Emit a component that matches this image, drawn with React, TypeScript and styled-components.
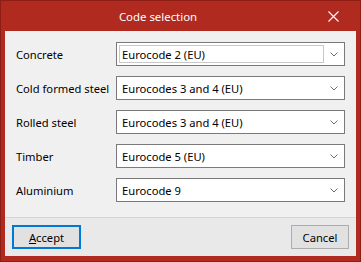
import React from "react";
import styled, { createGlobalStyle } from "styled-components";

const Global = createGlobalStyle`
  html, body { margin: 0; padding: 0; background: #ffffff; }
  * { box-sizing: border-box; }
`;

const Frame = styled.div`
  width: 361px;
  height: 262px;
  background: #b02a20;
  border: 1px solid #8e1d15;
  display: flex;
  flex-direction: column;
  font-family: "Noto Sans", "Segoe UI", sans-serif;
  font-size: 11.2px;
  color: #000;
`;

const TitleBar = styled.div`
  height: 30px;
  display: flex;
  align-items: center;
`;

const Title = styled.div`
  flex: 1;
  text-align: center;
  color: #fff;
  font-size: 11.4px;
  padding-top: 1px;
`;

const CloseBtn = styled.div`
  width: 36px;
  height: 30px;
  margin-right: 9px;
  display: flex;
  align-items: center;
  justify-content: center;
`;

const Content = styled.div`
  flex: 1;
  margin: 0 4px 5px 4px;
  background: #f0f0f0;
  display: flex;
  flex-direction: column;
`;

const Body = styled.div`
  height: 186px;
  padding: 11px 11px 0 11px;
  display: flex;
  flex-direction: column;
  gap: 10px;
`;

const Row = styled.div`
  display: flex;
  align-items: center;
  height: 24px;
`;

const Label = styled.div`
  width: 100px;
  white-space: nowrap;
`;

const Combo = styled.div`
  flex: 1;
  height: 24px;
  background: #fff;
  border: 1px solid #7a7a7a;
  display: flex;
  align-items: center;
  padding: 0 0 0 5px;
`;

const EditField = styled.div`
  flex: 1;
  height: 18px;
  border: 1px solid #c8c8c8;
  margin-left: -3px;
  padding-left: 2px;
  display: flex;
  align-items: center;
`;

const ComboText = styled.div`
  flex: 1;
  white-space: nowrap;
`;

const Arrow = styled.div`
  width: 20px;
  display: flex;
  justify-content: center;
  align-items: center;
`;

const Footer = styled.div`
  flex: 1;
  border-top: 1px solid #d6d6d6;
  background: #e9e9e9;
  display: flex;
  justify-content: space-between;
  align-items: center;
  padding: 0 7px;
`;

const Button = styled.div<{ $focus?: boolean; $w: number }>`
  width: ${(p) => p.$w}px;
  height: 24px;
  background: #e1e1e1;
  border: ${(p) => (p.$focus ? "2px solid #0078d7" : "1px solid #adadad")};
  display: flex;
  align-items: center;
  justify-content: center;
`;

const Chevron = () => (
  <svg width="8" height="5" viewBox="0 0 8 5">
    <path d="M0.5 0.5 L4 4 L7.5 0.5" fill="none" stroke="#707070" strokeWidth="1" />
  </svg>
);

const rows = [
  { label: "Concrete", value: "Eurocode 2 (EU)", edit: true },
  { label: "Cold formed steel", value: "Eurocodes 3 and 4 (EU)" },
  { label: "Rolled steel", value: "Eurocodes 3 and 4 (EU)" },
  { label: "Timber", value: "Eurocode 5 (EU)" },
  { label: "Aluminium", value: "Eurocode 9" },
];

export default function App() {
  return (
    <>
      <Global />
      <Frame>
        <TitleBar>
          <Title>Code selection</Title>
          <CloseBtn>
            <svg width="11" height="11" viewBox="0 0 11 11">
              <path d="M0.5 0.5 L10.5 10.5 M10.5 0.5 L0.5 10.5" stroke="#fff" strokeWidth="1.1" />
            </svg>
          </CloseBtn>
        </TitleBar>
        <Content>
          <Body>
            {rows.map((r) => (
              <Row key={r.label}>
                <Label>{r.label}</Label>
                <Combo>
                  {r.edit ? (
                    <EditField>
                      <ComboText>{r.value}</ComboText>
                    </EditField>
                  ) : (
                    <ComboText>{r.value}</ComboText>
                  )}
                  <Arrow>
                    <Chevron />
                  </Arrow>
                </Combo>
              </Row>
            ))}
          </Body>
          <Footer>
            <Button $focus $w={69}>
              <span>
                <u>A</u>ccept
              </span>
            </Button>
            <Button $w={58}>Cancel</Button>
          </Footer>
        </Content>
      </Frame>
    </>
  );
}
